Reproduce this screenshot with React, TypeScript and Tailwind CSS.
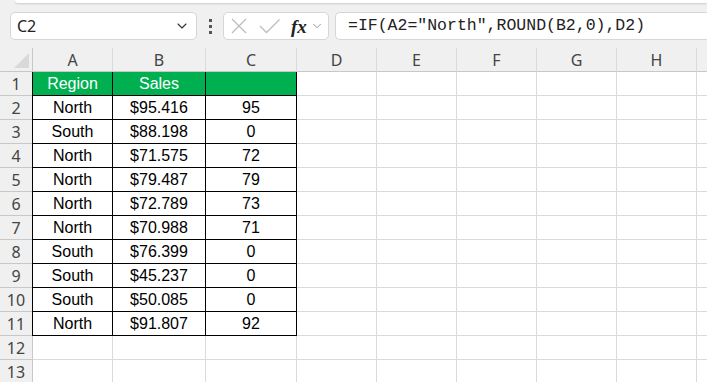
import { ChevronDown } from "lucide-react";

const rows = [
  ["North", "$95.416", "95"],
  ["South", "$88.198", "0"],
  ["North", "$71.575", "72"],
  ["North", "$79.487", "79"],
  ["North", "$72.789", "73"],
  ["North", "$70.988", "71"],
  ["South", "$76.399", "0"],
  ["South", "$45.237", "0"],
  ["South", "$50.085", "0"],
  ["North", "$91.807", "92"],
];

// the last column only peeks in at the edge, so its letter isn't shown
const cols = ["A", "B", "C", "D", "E", "F", "G", "H", ""];

function RowHead({ n }: { n: number }) {
  return (
    <div className="flex items-center justify-center pt-[1px] bg-[#f0f0f0] border-r border-b border-[#c8c8c8] text-[16px] text-[#444]">
      {n}
    </div>
  );
}

function Blank() {
  return <div className="bg-white border-r border-b border-[#dadada]" />;
}

export default function App() {
  return (
    <div className="w-[707px] h-[382px] overflow-hidden bg-[#f0f0f0] font-['Noto_Sans',sans-serif]">
      {/* ribbon edge */}
      <div className="ml-[15px] h-[3px] bg-white rounded-bl-[6px] shadow-[0_1px_2px_rgba(0,0,0,0.15)]" />

      {/* formula bar */}
      <div className="flex items-center h-[28px] mt-[9px] pl-[10px]">
        <div className="w-[187px] h-full flex items-center justify-between bg-white border border-[#d6d6d6] rounded-[5px] pl-[6px] pr-[6px]">
          <span className="text-[16px] text-[#222]">C2</span>
          <ChevronDown className="w-[16px] h-[16px] text-[#333]" strokeWidth={1.6} />
        </div>
        <div className="w-[26px] flex flex-col items-center gap-[3px]">
          <span className="w-[3px] h-[3px] bg-[#555]" />
          <span className="w-[3px] h-[3px] bg-[#555]" />
          <span className="w-[3px] h-[3px] bg-[#555]" />
        </div>
        <div className="w-[106px] h-full flex items-center bg-white border border-[#d6d6d6] rounded-[5px] pl-[6px]">
          <svg width="18" height="18" viewBox="0 0 18 18" className="shrink-0">
            <path d="M2 2 L16 16 M16 2 L2 16" stroke="#bdbdbd" strokeWidth="1.3" fill="none" />
          </svg>
          <svg width="22" height="18" viewBox="0 0 22 18" className="ml-[11px] shrink-0">
            <path d="M1 9 L7.5 15.5 L20.5 2.5" stroke="#bdbdbd" strokeWidth="1.3" fill="none" />
          </svg>
          <span className="ml-[10px] font-['Liberation_Serif',serif] italic font-bold text-[19px] leading-none text-[#222]">fx</span>
          <ChevronDown className="ml-[3px] w-[14px] h-[14px] text-[#888]" strokeWidth={1.5} />
        </div>
        <div className="flex-1 h-full ml-[6px] flex items-center bg-white border-y border-l border-[#d6d6d6] rounded-l-[5px] pl-[12px]">
          <span className="font-['Liberation_Mono',monospace] text-[16.5px] text-[#222]">
            =IF(A2="North",ROUND(B2,0),D2)
          </span>
        </div>
      </div>

      <div className="h-[8px]" />

      {/* sheet */}
      <div className="grid grid-cols-[33px_80px_93px_91px_80px_80px_80px_80px_80px_80px] auto-rows-[24px]">
        <div className="bg-[#f0f0f0] border-r border-b border-[#c8c8c8] flex items-end justify-end pr-[3px] pb-[3px]">
          <svg width="15" height="15" viewBox="0 0 15 15">
            <path d="M15 0 L15 15 L0 15 Z" fill="#d9d9d9" />
          </svg>
        </div>
        {cols.map((c, i) => (
          <div
            key={i}
            className="flex items-center justify-center pt-[1px] bg-[#f0f0f0] border-r border-b border-r-[#dadada] border-b-[#c8c8c8] text-[16px] text-[#444]"
          >
            {c}
          </div>
        ))}

        {/* header row of table */}
        <RowHead n={1} />
        <div className="flex items-center justify-center pt-[1px] bg-[#00b050] border-r border-b border-black shadow-[-1px_0_0_#000] text-white text-[16px] font-['Liberation_Sans',sans-serif]">
          Region
        </div>
        <div className="flex items-center justify-center pt-[1px] bg-[#00b050] border-r border-b border-black text-white text-[16px] font-['Liberation_Sans',sans-serif]">
          Sales
        </div>
        <div className="bg-[#00b050] border-r border-b border-black" />
        {[0, 1, 2, 3, 4, 5].map((i) => (
          <Blank key={i} />
        ))}

        {rows.map((r, i) => (
          <div key={i} className="contents">
            <RowHead n={i + 2} />
            <div className="flex items-center justify-center pt-[1px] bg-white border-r border-b border-black shadow-[-1px_0_0_#000] text-[16px] text-black font-['Liberation_Sans',sans-serif]">
              {r[0]}
            </div>
            <div className="flex items-center justify-center pt-[1px] bg-white border-r border-b border-black text-[16px] text-black font-['Liberation_Sans',sans-serif]">
              {r[1]}
            </div>
            <div className="flex items-center justify-center pt-[1px] bg-white border-r border-b border-black text-[16px] text-black font-['Liberation_Sans',sans-serif]">
              {r[2]}
            </div>
            {[0, 1, 2, 3, 4, 5].map((j) => (
              <Blank key={j} />
            ))}
          </div>
        ))}

        {[12, 13].map((n) => (
          <div key={n} className="contents">
            <RowHead n={n} />
            {[0, 1, 2, 3, 4, 5, 6, 7, 8].map((j) => (
              <Blank key={j} />
            ))}
          </div>
        ))}
      </div>
    </div>
  );
}
